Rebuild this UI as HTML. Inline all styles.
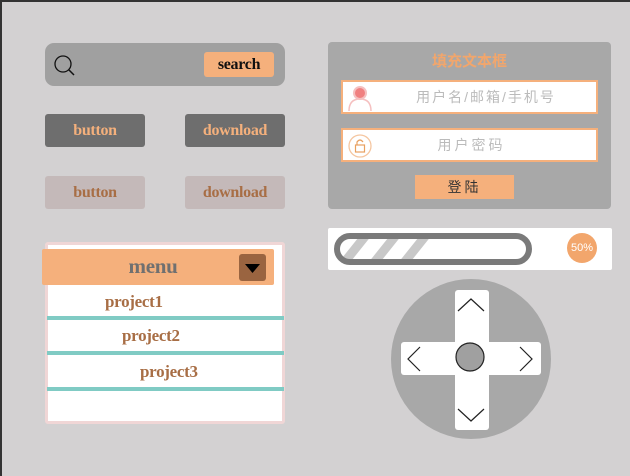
<!DOCTYPE html><html><head><style>
body{margin:0;width:630px;height:476px;background:#d3d1d2;position:relative;overflow:hidden;font-family:"Liberation Serif",serif}
div{position:absolute;box-sizing:border-box}
.b{font-weight:bold;text-align:center;font-size:16px;border-radius:3px;letter-spacing:-0.3px}
.cn{font-family:"Liberation Sans","Noto Sans CJK SC",sans-serif}
</style></head><body>
<div style="left:0;top:0;width:630px;height:2px;background:#333"></div>
<div style="left:0;top:0;width:2px;height:476px;background:#333"></div>
<div style="left:45px;top:43px;width:240px;height:43px;background:#a0a0a0;border-radius:9px"></div>
<svg style="position:absolute;left:52px;top:54px" width="26" height="24"><circle cx="11" cy="10" r="8" fill="none" stroke="#111" stroke-width="1.3"/><line x1="17" y1="16" x2="22" y2="21" stroke="#111" stroke-width="1.5"/></svg>
<div class="b" style="left:204px;top:52px;width:70px;height:25px;background:#f5b07c;color:#111;line-height:26px">search</div>
<div class="b" style="left:45px;top:114px;width:100px;height:33px;background:#6e6e6e;color:#f4b07c;line-height:34px">button</div>
<div class="b" style="left:185px;top:114px;width:100px;height:33px;background:#6e6e6e;color:#f4b07c;line-height:34px">download</div>
<div class="b" style="left:45px;top:176px;width:100px;height:33px;background:#c4b9b9;color:#a86e45;line-height:34px">button</div>
<div class="b" style="left:185px;top:176px;width:100px;height:33px;background:#c4b9b9;color:#a86e45;line-height:34px">download</div>

<div style="left:328px;top:42px;width:283px;height:167px;background:#a8a8a8;border-radius:4px"></div>
<div class="cn" style="left:328px;top:50px;width:283px;text-align:center;color:#f2a66c;font-weight:bold;font-size:15px">填充文本框</div>
<div style="left:341px;top:80px;width:257px;height:34px;background:#fff;border:2px solid #f5b07c"></div>
<svg style="position:absolute;left:346px;top:83px" width="28" height="30"><circle cx="14" cy="10" r="6" fill="#f08080" stroke="#f5c0c0" stroke-width="2"/><path d="M3 28 Q3 16 14 16 Q25 16 25 28" fill="none" stroke="#f5c0c0" stroke-width="1.5"/></svg>
<div class="cn" style="left:374px;top:87px;width:224px;text-align:center;color:#bbb;font-size:14px;letter-spacing:2px">用户名/邮箱/手机号</div>
<div style="left:341px;top:128px;width:257px;height:34px;background:#fff;border:2px solid #f5b07c"></div>
<svg style="position:absolute;left:347px;top:133px" width="26" height="26"><circle cx="13" cy="13" r="11" fill="none" stroke="#f5c6a0" stroke-width="1.3"/><rect x="8.5" y="12" width="9" height="7" fill="none" stroke="#e8a060" stroke-width="1.2"/><path d="M10 12 V9 Q13 5 16 9" fill="none" stroke="#e8a060" stroke-width="1.2"/></svg>
<div class="cn" style="left:374px;top:135px;width:195px;text-align:center;color:#bbb;font-size:14px;letter-spacing:3px">用户密码</div>
<div class="cn" style="left:415px;top:175px;width:99px;height:24px;background:#f5b07c;text-align:center;line-height:24px;font-size:14px;color:#333;letter-spacing:3px">登陆</div>

<div style="left:328px;top:228px;width:284px;height:42px;background:#fff;border-radius:2px"></div>
<svg style="position:absolute;left:333px;top:232px" width="200" height="34"><defs><clipPath id="c"><rect x="6" y="6" width="188" height="22" rx="11"/></clipPath></defs><g clip-path="url(#c)" stroke="#c8c8c8" stroke-width="9"><line x1="10" y1="32" x2="34" y2="2"/><line x1="40" y1="32" x2="64" y2="2"/><line x1="70" y1="32" x2="94" y2="2"/></g><rect x="4" y="4" width="192" height="26" rx="13" fill="none" stroke="#7a7a7a" stroke-width="6"/></svg>
<div class="cn" style="left:567px;top:233px;width:30px;height:30px;border-radius:50%;background:#f2a66c;color:#fff;font-size:11px;line-height:30px;text-align:center">50%</div>

<div style="left:45px;top:242px;width:240px;height:182px;background:#fff;border:3px solid #f0d6d6;border-radius:3px"></div>
<div style="left:42px;top:249px;width:232px;height:36px;background:#f5b07c;border-radius:2px"></div>
<div class="b" style="left:42px;top:254px;width:222px;font-size:21px;color:#707070">menu</div>
<div style="left:239px;top:254px;width:27px;height:27px;background:#9a6440;border-radius:3px"></div>
<svg style="position:absolute;left:239px;top:254px" width="27" height="27"><path d="M6 10 H21 L13.5 19 Z" fill="#000"/></svg>
<div style="left:47px;top:316px;width:237px;height:4px;background:#80cbc4"></div>
<div style="left:47px;top:351px;width:237px;height:4px;background:#80cbc4"></div>
<div style="left:47px;top:387px;width:237px;height:4px;background:#80cbc4"></div>
<div class="b" style="left:105px;top:292px;font-size:17px;color:#a86e45;text-align:left">project1</div>
<div class="b" style="left:122px;top:326px;font-size:17px;color:#a86e45;text-align:left">project2</div>
<div class="b" style="left:140px;top:362px;font-size:17px;color:#a86e45;text-align:left">project3</div>

<svg style="position:absolute;left:390px;top:279px" width="162" height="162"><circle cx="81" cy="80" r="80" fill="#a8a8a8"/><rect x="65" y="11" width="34" height="140" rx="3" fill="#fff"/><rect x="11" y="63" width="140" height="33" rx="3" fill="#fff"/><circle cx="80" cy="78" r="14" fill="#a0a0a0" stroke="#222" stroke-width="1.2"/><path d="M68 32 L81 20 L94 32" fill="none" stroke="#222" stroke-width="1.2"/><path d="M68 130 L81 142 L94 130" fill="none" stroke="#222" stroke-width="1.2"/><path d="M30 68 L18 80 L30 92" fill="none" stroke="#222" stroke-width="1.2"/><path d="M130 68 L142 80 L130 92" fill="none" stroke="#222" stroke-width="1.2"/></svg>
</body></html>
